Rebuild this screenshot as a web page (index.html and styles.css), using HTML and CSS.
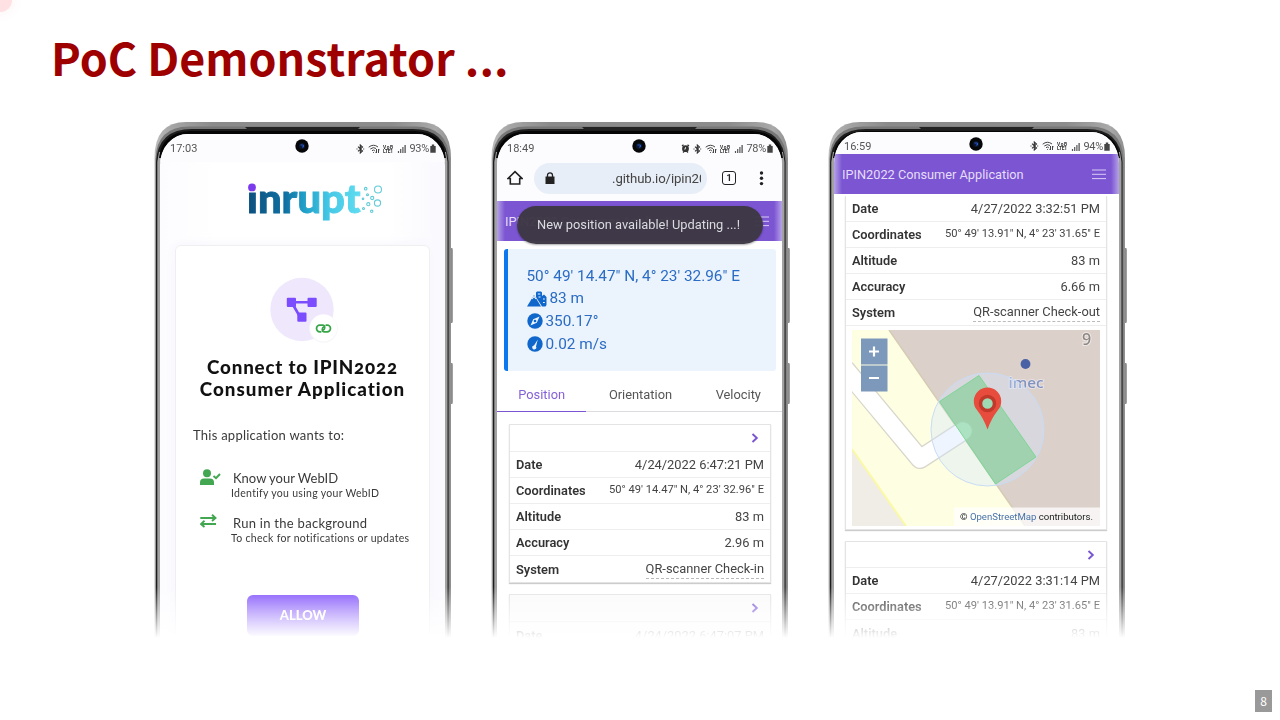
FILE: index.html
```html
<!DOCTYPE html>
<html lang="en">
<head>
<meta charset="utf-8">
<title>PoC Demonstrator ...</title>
<link rel="stylesheet" href="styles.css">
</head>
<body>
<svg class="defs" width="0" height="0" aria-hidden="true">
  <defs>
    <linearGradient id="metal" x1="0" x2="1" y1="0" y2="0">
      <stop offset="0" stop-color="#bdbdbd"/><stop offset=".06" stop-color="#a5a5a5"/><stop offset=".2" stop-color="#8a8a8a"/><stop offset=".8" stop-color="#8c8c8c"/><stop offset=".95" stop-color="#a9a9a9"/><stop offset="1" stop-color="#8f8f8f"/>
    </linearGradient>
    <linearGradient id="ink" x1="0" x2="1" y1="0" y2="0">
      <stop offset="0" stop-color="#0c4f7e"/><stop offset=".33" stop-color="#0f6fa0"/><stop offset=".5" stop-color="#1f9fc8"/><stop offset=".72" stop-color="#45c8e6"/><stop offset="1" stop-color="#5fdcf0"/>
    </linearGradient>
    <linearGradient id="key" x1="0" x2="1" y1="0" y2="0"><stop offset="0" stop-color="#777"/><stop offset="1" stop-color="#aaa"/></linearGradient>
    <symbol id="frame" viewBox="0 0 300 518">
      <path d="M296.500 126h1.500q1 0 1 2v71q0 2-1 2h-1.500zM296.500 241h1.500q1 0 1 2v37q0 2-1 2h-1.500z" fill="url(#key)"/>
      <path d="M.5 530V36Q.5 0 32 0H265Q297 0 297 36V530z" fill="url(#metal)"/>
      <path d="M1.500 530V37Q2.500 5 35 4.500H262Q294 5 295.500 37V530z" fill="#777"/>
      <path d="M2 530V40Q4 7 38 7H259Q292 7 294.500 40V530z" fill="#1c1c1c"/>
      <path d="M3.300 530V40L5 30H292L293.500 40V530z" fill="#a2a2a2"/>
      <path d="M5 36Q8 10 36 9H261Q289 10 292 36z" fill="#050505"/>
      <path d="M91 5H206L203 8H94z" fill="#222"/>
    </symbol>
    <symbol id="bt" viewBox="0 0 9 10"><path d="M2 2.700 6.500 7 4.300 9V1L6.500 3 2 7.300M.5 5h1M7.200 5h1" fill="none" stroke="#333" stroke-width="1.100"/></symbol>
    <symbol id="wifi" viewBox="0 0 12 10"><path d="M.7 3.200Q5.500-.6 10 3M2.300 5Q5.500 2.500 8 4.500M4 6.700Q5.500 5.400 6.800 6.500M8.500 5v4M7.300 7.800 8.500 9M10.500 9V5l1 1.200M5.500 8.200v.8" fill="none" stroke="#444" stroke-width="1"/></symbol>
    <symbol id="volte" viewBox="0 0 11 10"><text x="0" y="4.500" font-size="4.800" textLength="10" fill="#333" font-family="Roboto" font-weight="700">VoB</text><text x="0" y="9.300" font-size="4.800" textLength="10" fill="#333" font-family="Roboto" font-weight="700">LTE1</text></symbol>
    <symbol id="bars" viewBox="0 0 9 9"><path d="M1.500 9V7M3.700 9V5M5.900 9V3" stroke="#555" stroke-width="1.200"/><path d="M8.100 9V1" stroke="#444" stroke-width="1.200"/></symbol>
    <symbol id="batt" viewBox="0 0 6 9"><path d="M.3 2h1.500V.6h2.400V2h1.500v6.800H.3z" fill="#444"/></symbol>
    <symbol id="alarm" viewBox="0 0 9 9"><path d="M1 2 2.500.8M8 2 6.500.8M2 8.500l1-1M7 8.500l-1-1" stroke="#333" stroke-width="1.300"/><circle cx="4.500" cy="4.700" r="3.400" fill="#333"/><path d="M4.500 3v2H3" stroke="#fff" stroke-width=".7" fill="none"/></symbol>
    <symbol id="chev" viewBox="0 0 8 10"><path d="M1.500 1 5.800 5 1.500 9" fill="none" stroke="#7b55d0" stroke-width="1.900"/></symbol>
    <symbol id="menu" viewBox="0 0 14 11"><path d="M0 1H14M0 5.300H14M0 9.600H14" stroke="#d9cdf5" stroke-width="1"/></symbol>
    <symbol id="cam" viewBox="0 0 14 14"><circle cx="7" cy="7" r="6.700" fill="#060708"/><circle cx="7" cy="7" r="3" fill="#0c1630"/><path d="M5.500 6h3v2H7" fill="none" stroke="#2759c9" stroke-width="1"/></symbol>
  </defs>
</svg>
<span class="glow"></span>
<h1 class="title">PoC Demonstrator ...</h1>

<main class="phones">
  <section class="phone">
    <svg class="frame"><use href="#frame"/></svg>
    <div class="screen login">
      <svg class="cam"><use href="#cam"/></svg>
      <div class="status"><span class="clock">17:03</span><svg width="9" height="10"><use href="#bt"/></svg><svg width="12" height="10"><use href="#wifi"/></svg><svg width="11" height="10"><use href="#volte"/></svg><svg width="9" height="9"><use href="#bars"/></svg><span class="pct">93%</span><svg width="6" height="9"><use href="#batt"/></svg></div>
      <svg class="logo" width="140" height="44" viewBox="0 0 140 44">
        <text x="0" y="32.300" textLength="113.500" lengthAdjust="spacingAndGlyphs" fill="url(#ink)" stroke="url(#ink)" stroke-width=".9">inrupt</text>
        <rect x="-1" y="0" width="12" height="11.500" fill="#fff"/><circle cx="5" cy="6.400" r="3.900" fill="#7c3aed"/>
        <g fill="none" stroke="#62cbd8" stroke-width="1.100"><circle cx="131" cy="8.500" r="3.500"/><circle cx="130.500" cy="22" r="3.100"/><circle cx="118.700" cy="7.700" r="1.300"/><circle cx="120.500" cy="13.700" r="1"/><circle cx="125.200" cy="17" r="1.600"/><circle cx="116" cy="17.800" r=".8"/><circle cx="121.300" cy="23.200" r="1.600"/><circle cx="116.500" cy="27.500" r="1"/><circle cx="124.700" cy="30.300" r="1.200"/></g>
      </svg>
      <div class="consent">
        <svg class="app" width="72" height="68" viewBox="0 0 72 68">
          <circle cx="34" cy="32.500" r="31.700" fill="#efe8fc"/><circle cx="55.500" cy="51.500" r="14.300" fill="#f7f5fa"/><circle cx="55.500" cy="51" r="13.500" fill="#fff"/>
          <path d="M23 25.300H44M24 26 31 38" stroke="#7c4dff" stroke-width="2.600"/>
          <g fill="#7c4dff"><rect x="18.800" y="20.700" width="9.200" height="9.200" rx="1"/><rect x="39.500" y="20.700" width="9.200" height="9.200" rx="1"/><rect x="29.300" y="35.500" width="9.200" height="9.200" rx="1"/></g>
          <g fill="none" stroke="#37a447" stroke-width="1.700" stroke-linecap="round"><path d="M52.800 54.800H51.800a3.300 3.300 0 0 1 0-6.600H54.500q2.500 0 2.200 2.800-.2 2-1.900 2.200"/><path d="M58.200 48.200h1a3.300 3.300 0 0 1 0 6.600H56.500q-2.500 0-2.200-2.800.2-2 1.900-2.200"/></g>
        </svg>
        <h2 class="ask"><span class="ask-a">Connect to IPIN2022</span><span class="ask-b">Consumer Application</span></h2>
        <p class="wants">This application wants to:</p>
        <div class="perm"><svg width="21" height="17" viewBox="0 0 21 17"><circle cx="7" cy="4.300" r="4" fill="#43a651"/><path d="M0 16v-2.500Q0 9.500 4 9.500H10q4 0 4 4V16z" fill="#43a651"/><path d="M13.500 7 16 9.200 20 5" fill="none" stroke="#43a651" stroke-width="2"/></svg><div><div class="p1">Know your WebID</div><div class="s1">Identify you using your WebID</div></div></div>
        <div class="perm second"><svg width="21" height="17" viewBox="0 0 21 17"><path d="M.3 4H15M12 .8 15.500 4 12 7M16 10H1.500M4.500 6.800 1 10l3.500 3" fill="none" stroke="#43a651" stroke-width="1.900"/></svg><div><div class="p2">Run in the background</div><div class="s2">To check for notifications or updates</div></div></div>
        <div class="allow">ALLOW</div>
      </div>
    </div>
  </section>

  <section class="phone">
    <svg class="frame"><use href="#frame"/></svg>
    <div class="screen">
      <svg class="cam"><use href="#cam"/></svg>
      <div class="status"><span class="clock">18:49</span><svg width="9" height="9"><use href="#alarm"/></svg><svg width="9" height="10"><use href="#bt"/></svg><svg width="12" height="10"><use href="#wifi"/></svg><svg width="11" height="10"><use href="#volte"/></svg><svg width="9" height="9"><use href="#bars"/></svg><span class="pct">78%</span><svg width="6" height="9"><use href="#batt"/></svg></div>
      <div class="browser">
        <svg width="16" height="16" viewBox="0 0 16 16"><path d="M1 8.500 8 1.700 15 8.500H12.700V14H3.300V8.500z" fill="none" stroke="#222" stroke-width="1.600"/></svg>
        <div class="url"><svg width="10" height="12" viewBox="0 0 10 12"><path d="M.5 4.500h9V12h-9z" fill="#222"/><path d="M2.500 5V3.300a2.500 2.500 0 0 1 5 0V5" fill="none" stroke="#222" stroke-width="1.300"/></svg><span>.github.io/ipin20</span></div>
        <div class="tabcount">1</div>
        <svg width="5" height="15" viewBox="0 0 5 15"><g fill="#222"><circle cx="2.500" cy="2" r="1.700"/><circle cx="2.500" cy="7.300" r="1.700"/><circle cx="2.500" cy="12.600" r="1.700"/></g></svg>
      </div>
      <div class="appbar"><span>IPIN2022 Consumer Application</span><svg width="14" height="11"><use href="#menu"/></svg><div class="toast">New position available! Updating ...!</div></div>
      <div class="summary">
        <div class="sum-c">50° 49' 14.47" N, 4° 23' 32.96" E</div>
        <div><svg width="20" height="16" viewBox="0 0 20 16"><path d="M0 15.500 7 4l7 11.500z" fill="#0f66cb"/><path d="M9 6V1.500L10 .5h4l1 1V5l2-1.500L19.500 6v8l-1 1.500h-3.500z" fill="#0f66cb"/><path d="M5 8 7 5.500 9 8M10.800 3h2.500M11.500 6h2M16 8h1.800M16 11.500h1.800" stroke="#ebf3fd" stroke-width="1.200" fill="none"/></svg><span>83 m</span></div>
        <div><svg width="16" height="16" viewBox="0 0 16 16"><circle cx="8" cy="8" r="7.700" fill="#0f66cb"/><path d="M12.500 3.500 9.800 9.800 3.500 12.500 6.200 6.200z" fill="#ebf3fd"/><circle cx="8" cy="8" r="1.300" fill="#0f66cb"/></svg><span>350.17°</span></div>
        <div><svg width="16" height="16" viewBox="0 0 16 16"><circle cx="8" cy="8" r="7.700" fill="#0f66cb"/><path d="M10.800 3.500 9 10.500a2 2 0 1 1-2-1z" fill="#ebf3fd"/></svg><span>0.02 m/s</span></div>
      </div>
      <div class="tabs"><span class="on">Position</span><span class="t2">Orientation</span><span class="t3">Velocity</span></div>
      <div class="card">
        <div class="row head"><svg width="8" height="10"><use href="#chev"/></svg></div>
        <div class="row"><b>Date</b><span>4/24/2022 6:47:21 PM</span></div>
        <div class="row"><b>Coordinates</b><span class="coord">50° 49' 14.47" N, 4° 23' 32.96" E</span></div>
        <div class="row"><b>Altitude</b><span>83 m</span></div>
        <div class="row"><b>Accuracy</b><span>2.96 m</span></div>
        <div class="row"><b>System</b><span class="link">QR-scanner Check-in</span></div>
      </div>
      <div class="card shade">
        <div class="row head"><svg width="8" height="10"><use href="#chev"/></svg></div>
        <div class="row"><b>Date</b><span>4/24/2022 6:47:07 PM</span></div>
      </div>
    </div>
  </section>

  <section class="phone third">
    <svg class="frame"><use href="#frame"/></svg>
    <div class="screen">
      <svg class="cam"><use href="#cam"/></svg>
      <div class="status"><span class="clock">16:59</span><svg width="9" height="10"><use href="#bt"/></svg><svg width="12" height="10"><use href="#wifi"/></svg><svg width="11" height="10"><use href="#volte"/></svg><svg width="9" height="9"><use href="#bars"/></svg><span class="pct">94%</span><svg width="6" height="9"><use href="#batt"/></svg></div>
      <div class="appbar"><span>IPIN2022 Consumer Application</span><svg width="14" height="11"><use href="#menu"/></svg></div>
      <div class="card open">
        <div class="row"><b>Date</b><span>4/27/2022 3:32:51 PM</span></div>
        <div class="row"><b>Coordinates</b><span class="coord">50° 49' 13.91" N, 4° 23' 31.65" E</span></div>
        <div class="row"><b>Altitude</b><span>83 m</span></div>
        <div class="row"><b>Accuracy</b><span>6.66 m</span></div>
        <div class="row"><b>System</b><span class="link">QR-scanner Check-out</span></div>
        <svg class="map" width="248" height="196" viewBox="0 0 248 196">
          <rect width="248" height="196" fill="#dbd0ca"/>
          <path d="M0 0H37L160 177 173 196H0z" fill="#feffe2"/>
          <path d="M37 0 160 177 173 196" fill="none" stroke="#d6cbb5" stroke-width="1.500"/>
          <path d="M0 119 54 196H0z" fill="#efede6"/><path d="M0 119 54 196" stroke="#fbf9a5" stroke-width="2"/>
          <path d="M-6 40 68 129 111 101" fill="none" stroke="#d9d7cc" stroke-width="20" stroke-linejoin="round" stroke-linecap="round"/>
          <path d="M-6 40 68 129 111 101" fill="none" stroke="#fff" stroke-width="17.500" stroke-linejoin="round" stroke-linecap="round"/>
          <text x="230" y="15" font-size="16" fill="#8d8884" stroke="#eee9e5" stroke-width="2" paint-order="stroke" font-family="Noto Sans" font-weight="500">9</text>
          <circle cx="173.500" cy="34" r="4.900" fill="#4961a5"/>
          <text x="156.500" y="57.500" font-size="15" textLength="35" lengthAdjust="spacingAndGlyphs" fill="#8092bf" stroke="#e7e2e5" stroke-width="2" paint-order="stroke" font-family="Noto Sans" font-weight="500">imec</text>
          <circle cx="135.500" cy="99.500" r="56.500" fill="#cfe2ff" fill-opacity=".36" stroke="#c9dcf5" stroke-width="1"/>
          <path d="M87.500 71.500 127 45.500 184 127 143.500 154z" fill="#64cd80" fill-opacity=".48" stroke="#7ed695" stroke-width="1"/>
          <path d="M135.500 99.500Q132 89 125 80A13.700 13.700 0 1 1 146 80Q139 89 135.500 99.500z" fill="#e74c3c"/>
          <circle cx="135.500" cy="73.500" r="7" fill="#9edab3" stroke="#c0392b" stroke-width="3.500"/>
          <rect x="9" y="8.500" width="26.500" height="26" fill="#7c98bb"/><rect x="9" y="35.500" width="26.500" height="26" fill="#7c98bb"/>
          <path d="M17 21.500H27M22 16.500V26.500M17 48H27" stroke="#fff" stroke-width="2.200"/>
          <rect x="102" y="177.500" width="146" height="18.500" fill="#fff" fill-opacity=".75"/>
          <text x="108" y="190" font-size="9.600" textLength="133" font-family="Roboto" fill="#222">© <tspan fill="#4772a8">OpenStreetMap</tspan> contributors.</text>
        </svg>
      </div>
      <div class="card">
        <div class="row head"><svg width="8" height="10"><use href="#chev"/></svg></div>
        <div class="row"><b>Date</b><span>4/27/2022 3:31:14 PM</span></div>
        <div class="row"><b>Coordinates</b><span class="coord">50° 49' 13.91" N, 4° 23' 31.65" E</span></div>
        <div class="row"><b>Altitude</b><span>83 m</span></div>
      </div>
    </div>
  </section>
</main>
<div class="pageno">8</div>
</body>
</html>
```
FILE: styles.css
```css
* { box-sizing: border-box; }
body { margin: 0; width: 1280px; height: 720px; overflow: hidden; position: relative; background: #fff; font-family: Roboto, "Liberation Sans", sans-serif; color: #333; }
svg { display: block; flex: none; }
.defs { position: absolute; }
.glow { position: absolute; left: -12px; top: -12px; width: 24px; height: 24px; border-radius: 50%; background: #ffe0e3; box-shadow: 0 0 14px #ffeef0; }
.title { margin: 0; padding: 24px 0 0 51px; height: 122px; font: 700 44.800px/66px "Noto Sans CJK JP", "Noto Sans", sans-serif; color: #9e0000; white-space: nowrap; }
.phones { display: flex; gap: 37px; padding-left: 154px; }
.phone { position: relative; width: 300px; height: 518px; padding: 12px 9px 0 6px; flex: none; -webkit-mask-image: linear-gradient(#000 465px, transparent 516px); mask-image: linear-gradient(#000 465px, transparent 516px); }
.frame { position: absolute; left: 0; top: 0; width: 300px; height: 518px; }
.cam { position: absolute; left: 135px; top: 4.500px; width: 14px; height: 14px; }
.third .cam { top: 5px; }
.screen { position: relative; width: 285px; height: 506px; overflow: hidden; background: #fff; border-radius: 28px 28px 0 0 / 31px 31px 0 0; }
.third { padding-top: 10px; }
.third .screen { height: 508px; }

.status { display: flex; align-items: center; height: 28px; padding: 1px 9px 0 10px; gap: 3px; font-size: 11px; color: #555; background: #fcfcff; }
.clock { margin-right: auto; }
.pct { letter-spacing: -.3px; margin-right: -2px; }
.third .status { height: 22px; padding-top: 6px; }

.login { background: linear-gradient(90deg, #fcfcff, #fff 20%, #fff 80%, #f9f9fe); }
.logo { margin: 19px 0 0 87px; font: 900 40px Lato, sans-serif; overflow: visible; }
.consent { width: 255px; height: 410px; margin: 20px 0 0 15px; border: 1px solid #f0eeef; border-radius: 6px; background: #fff; box-shadow: 0 0 12px #f5f5fc; font-family: Lato, sans-serif; color: #3a3a3a; white-space: nowrap; }
.app { margin: 31px 0 0 92px; }
.ask { margin: 11px 0 0; display: flex; flex-direction: column; align-items: center; font-weight: 900; font-size: 18.800px; line-height: 22px; color: #111; font-feature-settings: "onum"; }
.ask-a { letter-spacing: .8px; }
.ask-b { letter-spacing: 1px; }
.wants { margin: 27px 0 0 17px; font-size: 13px; line-height: 16px; letter-spacing: .25px; }
.perm { display: flex; gap: 10px; margin: 24px 0 0 24px; }
.perm svg { margin-top: 2px; }
.p1, .p2 { font-size: 13px; line-height: 16px; padding: 3px 0 0 2px; }
.p2 { letter-spacing: .28px; }
.s1, .s2 { font-size: 10.500px; line-height: 14px; letter-spacing: .3px; }
.perm.second { margin-top: 12px; }
.allow { width: 112px; height: 41px; margin: 50px 0 0 71px; border-radius: 6px; background: linear-gradient(#8558fb, #9b78fb); color: #fff; font-weight: 900; font-size: 13px; line-height: 40px; text-align: center; }

.browser { display: flex; align-items: center; height: 39px; padding: 0 18px 7px 10px; background: #fcfcff; }
.url { display: flex; align-items: center; width: 173px; height: 31px; margin: 0 15px 0 11px; padding: 0 6px 0 11px; border-radius: 16px; background: #e8eef7; font-size: 13.200px; letter-spacing: -.1px; color: #444; white-space: nowrap; }
.url span { margin-left: auto; width: 89px; overflow: hidden; }
.tabcount { width: 14px; height: 14px; margin-right: auto; border: 1.500px solid #222; border-radius: 3px; font-size: 9px; line-height: 12px; text-align: center; color: #222; font-weight: 700; }
.appbar { position: relative; display: flex; align-items: center; justify-content: space-between; height: 40px; padding: 0 13px 0 8px; background: linear-gradient(90deg, #b6a2e8, #7b55d2 8px, #7b55d2 277px, #b6a2e8); color: #e6ddf8; font-size: 12.750px; white-space: nowrap; }
.toast { position: absolute; left: 20px; top: 5px; width: 246px; height: 38px; padding-right: 3px; border-radius: 19px; background: #3e3845f8; color: #dcdce0; font-size: 12.850px; line-height: 38px; text-align: center; box-shadow: 0 1px 2px #0005; }
.summary { width: 272px; height: 122px; margin: 8px 0 0 7px; padding: 15.500px 0 0 18.500px; border-left: 4px solid #0b78ee; border-radius: 3px; background: #ebf3fd; color: #2b6cc4; font-size: 15.350px; line-height: 22.800px; }
.summary div { display: flex; align-items: center; gap: 3px; white-space: nowrap; }
.tabs { display: flex; height: 41px; border-bottom: 1px solid #dcdce0; font-size: 12.850px; line-height: 48px; color: #555; text-align: center; }
.on { width: 90px; height: 41px; border-bottom: 1.500px solid #7b55d2; color: #8660d6; }
.t2 { width: 109px; }
.t3 { width: 88px; }
.card { width: 262px; margin: 12px 0 0 12px; border: 1px solid #e4e4e4; box-shadow: 0 1px 1px #ccc; background: #fff; }
.card + .card { margin-top: 11px; }
.shade { background: #fafafa; }
.row { display: flex; align-items: center; justify-content: space-between; height: 26px; padding: 0 6px; border-bottom: 1px solid #eee; font-size: 12.850px; white-space: nowrap; color: #444; }
.row:last-child { border-bottom: 0; }
.row b { font-weight: 600; font-size: 12.800px; color: #333; }
.row.head { justify-content: flex-end; height: 27px; padding-right: 11px; }
.coord { font-size: 11.150px; padding-bottom: 3px; }
.link { border-bottom: 1px dashed #bbb; line-height: 18px; }
.third .card { margin-left: 11px; }
.third .open { margin-top: 2px; border-top: 0; height: 334px; }
.third .card + .card { margin-top: 11px; }
.third .card + .card .head { height: 26px; }
.map { margin: 4px 0 0 6px; }
.pageno { position: absolute; right: 8px; bottom: 8px; width: 17px; height: 22px; background: #999; color: #fff; font: 12px/22px "Noto Sans CJK JP", sans-serif; text-align: center; }
```
